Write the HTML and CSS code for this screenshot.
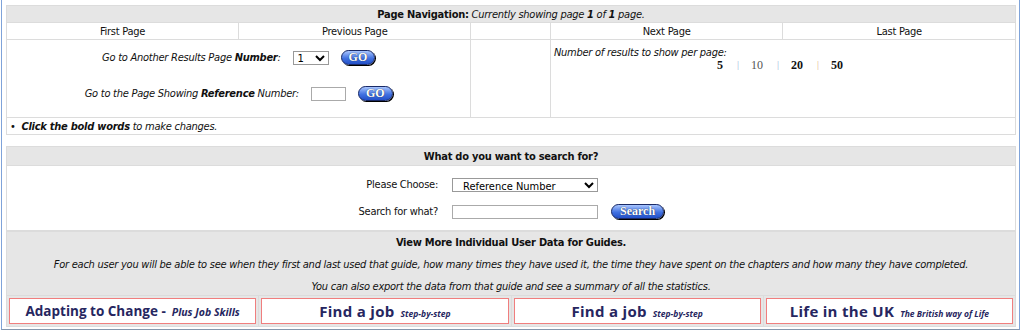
FILE: index.html
```html
<!DOCTYPE html>
<html>
<head>
    <meta charset="UTF-8">
    <title>Guide Users</title>
    <link rel="stylesheet" href="styles.css">
</head>
<body>
<div class="page">

    <table class="panel nav">
        <tr>
            <td colspan="5" class="head"><b>Page Navigation:</b> <i>Currently showing page <b>1</b> of <b>1</b> page.</i></td>
        </tr>
        <tr class="links">
            <td class="c1">First Page</td>
            <td class="c2">Previous Page</td>
            <td class="c3"></td>
            <td class="c4">Next Page</td>
            <td class="c5">Last Page</td>
        </tr>
        <tr class="tools">
            <td colspan="2" class="jump">
                <div class="jump-row">
                    <i>Go to Another Results Page <b>Number</b>:</i>
                    <select class="sel-page"><option>1</option></select>
                    <button class="pill">GO</button>
                </div>
                <div class="jump-row">
                    <i>Go to the Page Showing <b>Reference</b> Number:</i>
                    <input type="text" class="ref-box">
                    <button class="pill">GO</button>
                </div>
            </td>
            <td></td>
            <td colspan="2" class="per-page">
                <i>Number of results to show per page:</i>
                <div class="counts">
                    <b>5</b><span class="sep">|</span><span class="cur">10</span><span class="sep">|</span><b>20</b><span class="sep orange">|</span><b>50</b>
                </div>
            </td>
        </tr>
        <tr>
            <td colspan="5" class="hint">&bull;&nbsp; <i><b>Click the bold words</b> to make changes.</i></td>
        </tr>
    </table>

    <table class="panel search">
        <tr>
            <td class="head"><b>What do you want to search for?</b></td>
        </tr>
        <tr>
            <td class="search-body">
                <div class="field">
                    <label>Please Choose:</label>
                    <select class="sel-type"><option>Reference Number</option></select>
                </div>
                <div class="field">
                    <label>Search for what?</label>
                    <input type="text" class="search-box">
                    <button class="pill">Search</button>
                </div>
            </td>
        </tr>
    </table>

    <table class="panel guides">
        <tr>
            <td colspan="4" class="guides-info">
                <p class="title"><b>View More Individual User Data for Guides.</b></p>
                <p><i>For each user you will be able to see when they first and last used that guide, how many times they have used it, the time they have spent on the chapters and how many they have completed.</i></p>
                <p class="last"><i>You can also export the data from that guide and see a summary of all the statistics.</i></p>
            </td>
        </tr>
        <tr>
            <td><a class="guide small">Adapting to Change - <em>Plus Job Skills</em></a></td>
            <td><a class="guide">Find a job <em>Step-by-step</em></a></td>
            <td><a class="guide">Find a job <em>Step-by-step</em></a></td>
            <td><a class="guide">Life in the UK <em>The British way of Life</em></a></td>
        </tr>
    </table>

</div>
</body>
</html>
```

FILE: styles.css
```css
body {
    margin: 0;
    background: #fff;
    font-family: "DejaVu Sans Condensed", "DejaVu Sans", sans-serif;
    font-size: 11px;
    letter-spacing: -0.25px;
    color: #111;
}

.page {
    width: 1019px;
    height: 330px;
    margin-left: 1px;
    border-left: 1px solid #7fa3d9;
    border-right: 1px solid #7fa3d9;
    border-bottom: 1px solid #8597ad;
    padding: 5px 4px 0 4px;
    box-sizing: border-box;
    overflow: hidden;
}

.panel {
    width: 1010px;
    border-collapse: collapse;
    border: 1px solid #d8d8d8;
}

.panel td {
    border: 1px solid #dcdcdc;
    padding: 0;
}

.head {
    background: #e6e6e6;
    text-align: center;
    height: 16px;
}

/* navigation */
.links td {
    text-align: center;
    height: 16px;
}

.c1, .c2, .c4, .c5 {
    width: 232px;
}

.c3 {
    width: 79px;
}

.tools td {
    height: 71px;
    vertical-align: top;
}

.jump {
    text-align: center;
}

.jump-row {
    display: flex;
    justify-content: center;
    align-items: center;
    gap: 12px;
    height: 19px;
    margin-top: 8px;
}

.jump-row + .jump-row {
    margin-top: 17px;
}

.sel-page {
    width: 36px;
    height: 14px;
    font-size: 10px;
    padding: 0;
    border: 1px solid #999;
    border-radius: 0;
    background: #fff;
    font-family: "DejaVu Sans", sans-serif;
}

.ref-box {
    width: 35px;
    height: 14px;
    border: 1px solid #aaa;
    padding: 0;
    box-sizing: border-box;
}

.pill {
    height: 15px;
    padding: 0 7px;
    border: 1px solid #1a2a66;
    border-radius: 8px;
    background: linear-gradient(#a9c6ff, #4373e2 55%, #2350c8);
    color: #fff;
    font-family: "Liberation Serif", serif;
    font-weight: bold;
    font-size: 12px;
    letter-spacing: 0;
    line-height: 13px;
    box-shadow: 1px 1px 0 #000;
    text-shadow: 0 0 1px #123;
}

.per-page {
    padding: 6px 3px 0 3px !important;
}

.counts {
    display: flex;
    align-items: center;
    padding-left: 163px;
    font-family: "Liberation Serif", serif;
    font-size: 12px;
    letter-spacing: 0;
    line-height: 12px;
}

.counts b {
    color: #111;
}

.cur {
    color: #555;
}

.sep {
    color: #9ab0d8;
    margin: 0 12px 0 14px;
    font-size: 10px;
}

.sep.orange {
    color: #e4b08a;
}

.hint {
    height: 16px;
    padding-left: 3px !important;
}

/* search */
.search {
    margin-top: 11px;
}

.search .head {
    height: 18px;
}

.search-body {
    height: 64px;
    vertical-align: top;
}

.field {
    display: flex;
    align-items: center;
    height: 27px;
}

.field:first-child {
    margin-top: 5px;
}

.field label {
    width: 431px;
    text-align: right;
    margin-right: 14px;
}

.sel-type {
    width: 146px;
    height: 14px;
    font-size: 11px;
    padding: 0 0 0 6px;
    border: 1px solid #999;
    border-radius: 0;
    background: #fff;
    font-family: "DejaVu Sans Condensed", sans-serif;
}

.search-box {
    width: 146px;
    height: 14px;
    border: 1px solid #aaa;
    padding: 0;
    box-sizing: border-box;
    margin-right: 13px;
}

.search .pill {
    padding: 0 8px;
}

/* guides */
.guides {
    background: #e6e6e6;
}

.guides td {
    width: 25%;
    padding: 2px;
}

.guides td.guides-info {
    text-align: center;
    vertical-align: top;
    height: 58px;
    padding: 4px 0 0 0;
}

.guides-info p {
    margin: 0;
    height: 22px;
    line-height: 14px;
}

.guides-info p.last {
    height: 15px;
}

.guide {
    display: flex;
    align-items: baseline;
    justify-content: center;
    gap: 6px;
    height: 24px;
    line-height: 24px;
    background: #fff;
    border: 1px solid #f07e7e;
    color: #262660;
    font-family: "Open Sans", sans-serif;
    font-weight: bold;
    font-size: 15px;
    letter-spacing: 0.3px;
}

.guide.small {
    font-size: 13.5px;
    letter-spacing: 0;
}

.guide em {
    font-size: 8.5px;
    letter-spacing: 0;
}

.guide.small em {
    font-size: 10.5px;
}
```
